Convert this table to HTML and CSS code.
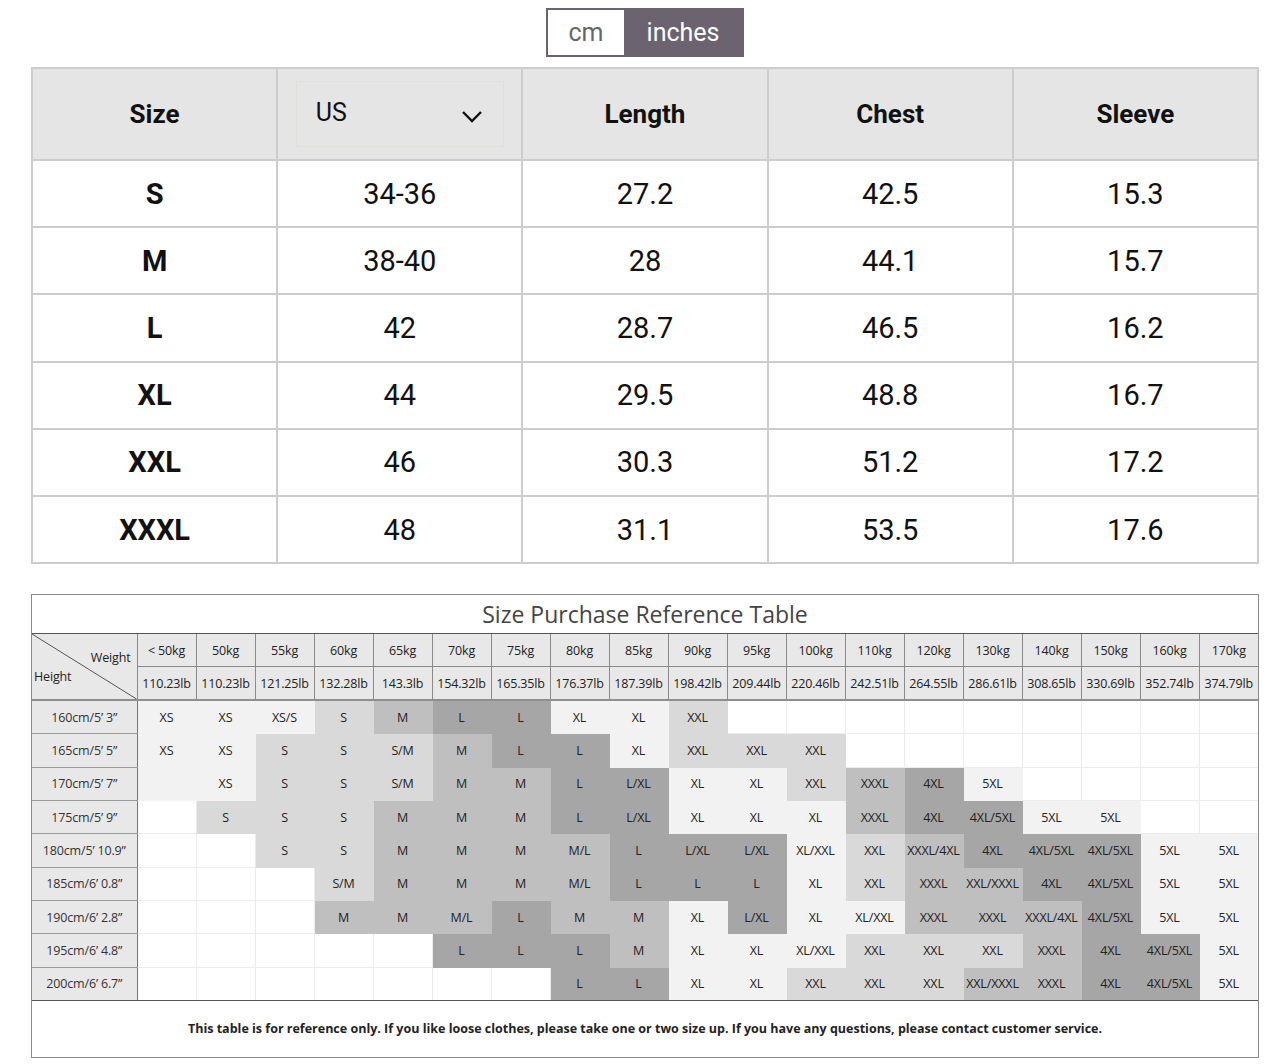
FILE: index.html
```html
<!DOCTYPE html>
<html>
<head>
<meta charset="utf-8">
<link rel="stylesheet" href="styles.css">
</head>
<body>
<div class="page">
  <div class="toggle">
    <div class="opt opt-cm">cm</div>
    <div class="opt opt-in">inches</div>
  </div>

  <table class="size-table">
    <thead>
      <tr>
        <th>Size</th>
        <th><div class="select"><span>US</span><svg class="chev" width="24" height="24" viewBox="0 0 24 24"><polyline points="3,7 12,16 21,7" fill="none" stroke="#111" stroke-width="2.4"/></svg></div></th>
        <th>Length</th>
        <th>Chest</th>
        <th>Sleeve</th>
      </tr>
    </thead>
    <tbody>
      <tr><td class="sz">S</td><td>34-36</td><td>27.2</td><td>42.5</td><td>15.3</td></tr>
      <tr><td class="sz">M</td><td>38-40</td><td>28</td><td>44.1</td><td>15.7</td></tr>
      <tr><td class="sz">L</td><td>42</td><td>28.7</td><td>46.5</td><td>16.2</td></tr>
      <tr><td class="sz">XL</td><td>44</td><td>29.5</td><td>48.8</td><td>16.7</td></tr>
      <tr><td class="sz">XXL</td><td>46</td><td>30.3</td><td>51.2</td><td>17.2</td></tr>
      <tr><td class="sz">XXXL</td><td>48</td><td>31.1</td><td>53.5</td><td>17.6</td></tr>
    </tbody>
  </table>

  <div class="ref">
    <div class="ref-title">Size Purchase Reference Table</div>
    <table class="ref-table">
      <colgroup><col class="col-h"></colgroup>
      <thead>
        <tr class="kg">
          <th class="corner" rowspan="2">
            <svg class="diag" viewBox="0 0 100 100" preserveAspectRatio="none"><line x1="0" y1="0" x2="100" y2="100" stroke="#555" stroke-width="1" vector-effect="non-scaling-stroke"/></svg>
            <span class="lbl-w">Weight</span>
            <span class="lbl-h">Height</span>
          </th>
          <th>&lt; 50kg</th><th>50kg</th><th>55kg</th><th>60kg</th><th>65kg</th><th>70kg</th><th>75kg</th><th>80kg</th><th>85kg</th><th>90kg</th><th>95kg</th><th>100kg</th><th>110kg</th><th>120kg</th><th>130kg</th><th>140kg</th><th>150kg</th><th>160kg</th><th>170kg</th>
        </tr>
        <tr class="lb">
          <th>110.23lb</th><th>110.23lb</th><th>121.25lb</th><th>132.28lb</th><th>143.3lb</th><th>154.32lb</th><th>165.35lb</th><th>176.37lb</th><th>187.39lb</th><th>198.42lb</th><th>209.44lb</th><th>220.46lb</th><th>242.51lb</th><th>264.55lb</th><th>286.61lb</th><th>308.65lb</th><th>330.69lb</th><th>352.74lb</th><th>374.79lb</th>
        </tr>
      </thead>
      <tbody>
        <tr><th class="h">160cm/5’ 3”</th><td class="c1">XS</td><td class="c1">XS</td><td class="c1">XS/S</td><td class="c2">S</td><td class="c3">M</td><td class="c4">L</td><td class="c4">L</td><td class="c1">XL</td><td class="c1">XL</td><td class="c2">XXL</td><td class="c0"></td><td class="c0"></td><td class="c0"></td><td class="c0"></td><td class="c0"></td><td class="c0"></td><td class="c0"></td><td class="c0"></td><td class="c0"></td></tr>
        <tr><th class="h">165cm/5’ 5”</th><td class="c1">XS</td><td class="c1">XS</td><td class="c2">S</td><td class="c2">S</td><td class="c2">S/M</td><td class="c3">M</td><td class="c4">L</td><td class="c4">L</td><td class="c1">XL</td><td class="c2">XXL</td><td class="c2">XXL</td><td class="c2">XXL</td><td class="c0"></td><td class="c0"></td><td class="c0"></td><td class="c0"></td><td class="c0"></td><td class="c0"></td><td class="c0"></td></tr>
        <tr><th class="h">170cm/5’ 7”</th><td class="c1"></td><td class="c1">XS</td><td class="c2">S</td><td class="c2">S</td><td class="c2">S/M</td><td class="c3">M</td><td class="c3">M</td><td class="c4">L</td><td class="c4">L/XL</td><td class="c1">XL</td><td class="c1">XL</td><td class="c2">XXL</td><td class="c3">XXXL</td><td class="c4">4XL</td><td class="c1">5XL</td><td class="c0"></td><td class="c0"></td><td class="c0"></td><td class="c0"></td></tr>
        <tr><th class="h">175cm/5’ 9”</th><td class="c0"></td><td class="c2">S</td><td class="c2">S</td><td class="c2">S</td><td class="c3">M</td><td class="c3">M</td><td class="c3">M</td><td class="c4">L</td><td class="c4">L/XL</td><td class="c1">XL</td><td class="c1">XL</td><td class="c1">XL</td><td class="c3">XXXL</td><td class="c4">4XL</td><td class="c4">4XL/5XL</td><td class="c1">5XL</td><td class="c1">5XL</td><td class="c0"></td><td class="c0"></td></tr>
        <tr><th class="h">180cm/5’ 10.9”</th><td class="c0"></td><td class="c0"></td><td class="c2">S</td><td class="c2">S</td><td class="c3">M</td><td class="c3">M</td><td class="c3">M</td><td class="c3">M/L</td><td class="c4">L</td><td class="c4">L/XL</td><td class="c4">L/XL</td><td class="c1">XL/XXL</td><td class="c2">XXL</td><td class="c3">XXXL/4XL</td><td class="c4">4XL</td><td class="c4">4XL/5XL</td><td class="c4">4XL/5XL</td><td class="c1">5XL</td><td class="c1">5XL</td></tr>
        <tr><th class="h">185cm/6’ 0.8”</th><td class="c0"></td><td class="c0"></td><td class="c0"></td><td class="c2">S/M</td><td class="c3">M</td><td class="c3">M</td><td class="c3">M</td><td class="c3">M/L</td><td class="c4">L</td><td class="c4">L</td><td class="c4">L</td><td class="c1">XL</td><td class="c2">XXL</td><td class="c3">XXXL</td><td class="c3">XXL/XXXL</td><td class="c4">4XL</td><td class="c4">4XL/5XL</td><td class="c1">5XL</td><td class="c1">5XL</td></tr>
        <tr><th class="h">190cm/6’ 2.8”</th><td class="c0"></td><td class="c0"></td><td class="c0"></td><td class="c3">M</td><td class="c3">M</td><td class="c3">M/L</td><td class="c4">L</td><td class="c3">M</td><td class="c3">M</td><td class="c1">XL</td><td class="c4">L/XL</td><td class="c1">XL</td><td class="c1">XL/XXL</td><td class="c3">XXXL</td><td class="c3">XXXL</td><td class="c3">XXXL/4XL</td><td class="c4">4XL/5XL</td><td class="c1">5XL</td><td class="c1">5XL</td></tr>
        <tr><th class="h">195cm/6’ 4.8”</th><td class="c0"></td><td class="c0"></td><td class="c0"></td><td class="c0"></td><td class="c0"></td><td class="c4">L</td><td class="c4">L</td><td class="c4">L</td><td class="c3">M</td><td class="c1">XL</td><td class="c1">XL</td><td class="c1">XL/XXL</td><td class="c2">XXL</td><td class="c2">XXL</td><td class="c2">XXL</td><td class="c3">XXXL</td><td class="c4">4XL</td><td class="c4">4XL/5XL</td><td class="c1">5XL</td></tr>
        <tr><th class="h">200cm/6’ 6.7”</th><td class="c0"></td><td class="c0"></td><td class="c0"></td><td class="c0"></td><td class="c0"></td><td class="c0"></td><td class="c0"></td><td class="c4">L</td><td class="c4">L</td><td class="c1">XL</td><td class="c1">XL</td><td class="c2">XXL</td><td class="c2">XXL</td><td class="c2">XXL</td><td class="c3">XXL/XXXL</td><td class="c3">XXXL</td><td class="c4">4XL</td><td class="c4">4XL/5XL</td><td class="c1">5XL</td></tr>
      </tbody>
    </table>
    <div class="ref-foot">This table is for reference only. If you like loose clothes, please take one or two size up. If you have any questions, please contact customer service.</div>
  </div>
</div>
</body>
</html>
```

FILE: styles.css
```css
html, body {
  margin: 0;
  padding: 0;
  background: #fff;
}
body {
  font-family: Roboto, "Liberation Sans", sans-serif;
  color: #111;
}
.page {
  width: 1228px;
  margin-left: 31px;
  padding-top: 8px;
}

/* unit toggle */
.toggle {
  display: flex;
  width: 198px;
  height: 49px;
  margin: 0 auto 10px;
  border: 2px solid #6b6470;
  box-sizing: border-box;
}
.opt {
  display: flex;
  align-items: center;
  justify-content: center;
  font-size: 25px;
}
.opt-cm {
  width: 76px;
  color: #666;
  background: #fff;
}
.opt-in {
  flex: 1;
  color: #fff;
  background: #6b6470;
}

/* main size table */
.size-table {
  width: 1228px;
  border-collapse: collapse;
  table-layout: fixed;
}
.size-table th,
.size-table td {
  border: 2px solid #cdcdcd;
  text-align: center;
  padding: 0;
}
.size-table th {
  height: 90px;
  background: #e5e5e5;
  font-size: 26px;
  font-weight: 700;
}
.size-table td {
  height: 65.2px;
  font-size: 29px;
  font-weight: 400;
}
.size-table td.sz {
  font-weight: 700;
}
.select {
  display: flex;
  align-items: center;
  justify-content: space-between;
  width: 208px;
  height: 66px;
  margin: 0 auto;
  padding: 0 19px 4px 19px;
  box-sizing: border-box;
  border: 1px solid #e0e0da;
  font-size: 25px;
  font-weight: 400;
}
.chev {
  margin-top: 10px;
}

/* reference table */
.ref {
  margin-top: 30px;
  width: 1228px;
  border: 1px solid #8a8a8a;
  box-sizing: border-box;
  font-family: "Open Sans", "Noto Sans", sans-serif;
  color: #222;
}
.ref-title {
  height: 38px;
  line-height: 38px;
  text-align: center;
  font-size: 23px;
  color: #444;
  border-bottom: 1px solid #555;
}
.ref-table {
  width: 100%;
  border-collapse: collapse;
  table-layout: fixed;
  font-size: 12.5px;
  letter-spacing: -0.15px;
}
.col-h {
  width: 105px;
}
.ref-table th,
.ref-table td {
  padding: 0;
  text-align: center;
  font-weight: 400;
  white-space: nowrap;
}
.ref-table thead th {
  background: #e8e8e8;
  border: 1px solid #8a8a8a;
  height: 32px;
}
.ref-table thead tr.kg th {
  border-top: none;
}
.ref-table thead tr.lb th {
  border-bottom: 2px solid #8f8f8f;
}
.ref-table thead th:last-child {
  border-right: none;
}
.ref-table .corner {
  position: relative;
  border-left: none;
  border-bottom: 2px solid #8f8f8f;
}
.diag {
  position: absolute;
  left: 0;
  top: 0;
  width: 100%;
  height: 100%;
}
.lbl-w {
  position: absolute;
  right: 6px;
  top: 15px;
}
.lbl-h {
  position: absolute;
  left: 2px;
  top: 34px;
}
.ref-table tbody th.h {
  background: #e8e8e8;
  border-top: 1px solid #9a9a9a;
  border-bottom: 1px solid #9a9a9a;
  border-right: 1px solid #777;
  border-left: none;
  height: 32.3px;
  color: #333;
}
.ref-table td {
  border: 1px solid #ececec;
}
.ref-table td:last-child {
  border-right: none;
}
.ref-table tbody tr:last-child td,
.ref-table tbody tr:last-child th {
  border-bottom: none;
}
.c0 { background: #ffffff; }
.ref-table td.c1 { background: #f2f2f2; border-color: #f2f2f2; }
.ref-table td.c2 { background: #d9d9d9; border-color: #d9d9d9; }
.ref-table td.c3 { background: #bfbfbf; border-color: #bfbfbf; }
.ref-table td.c4 { background: #a6a6a6; border-color: #a6a6a6; }

.ref-foot {
  height: 56px;
  border-top: 1px solid #555;
  display: flex;
  align-items: center;
  justify-content: center;
  font-size: 12.5px;
  font-weight: 700;
  color: #222;
}
```
